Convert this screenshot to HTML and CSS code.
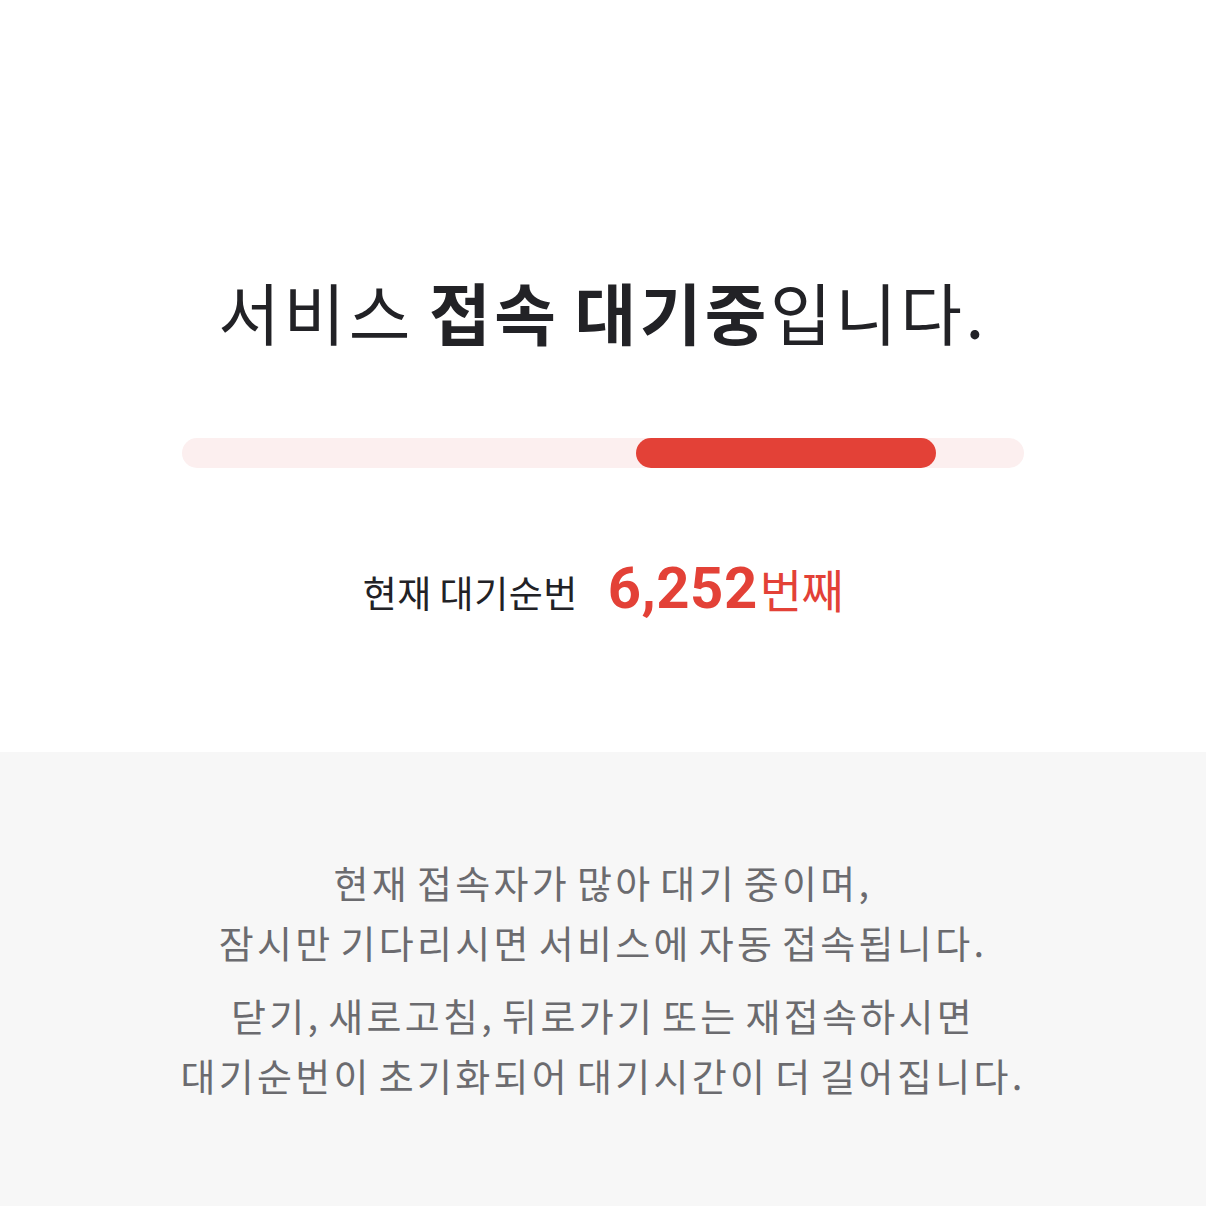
FILE: index.html
```html
<!DOCTYPE html>
<html lang="ko">
<head>
  <meta charset="UTF-8">
  <title>서비스 접속 대기중</title>
  <meta name="viewport" content="width=device-width, initial-scale=1">
  <link rel="stylesheet" href="styles.css">
</head>
<body>
<main class="queue">
  <section class="queue-top">
    <h1 class="queue-title">서비스 <strong>접속 대기중</strong>입니다.</h1>
    <div class="progress">
      <div class="progress-bar"></div>
    </div>
    <p class="queue-number">
      <span class="label">현재 대기순번</span>
      <span class="count"><b>6,252</b>번째</span>
    </p>
  </section>
  <section class="queue-notice">
    <p>현재 접속자가 많아 대기 중이며,<br>잠시만 기다리시면 서비스에 자동 접속됩니다.</p>
    <p>닫기, 새로고침, 뒤로가기 또는 재접속하시면<br>대기순번이 초기화되어 대기시간이 더 길어집니다.</p>
  </section>
</main>
</body>
</html>
```

FILE: styles.css
```css
:root {
    --red: #e34137;
    --text: #222226;
    --muted: #6b6b6f;
}

body {
    margin: 0;
    background: #fff;
    font-family: "Noto Sans CJK KR", "Noto Sans", sans-serif;
    color: var(--text);
}

.queue {
    min-height: 1206px;
    display: flex;
    flex-direction: column;
}

.queue-top {
    height: 752px;
    display: flex;
    flex-direction: column;
    align-items: center;
    box-sizing: border-box;
    padding-top: 264px;
}

.queue-title {
    margin: 0;
    font-size: 67px;
    font-weight: 400;
    line-height: 94px;
    letter-spacing: 3.5px;
    word-spacing: -7px;
}

.queue-title strong {
    font-weight: 700;
}

.progress {
    margin-top: 80px;
    width: 842px;
    height: 30px;
    border-radius: 15px;
    background: #fcefef;
    overflow: hidden;
}

.progress-bar {
    margin-left: 454px;
    width: 300px;
    height: 100%;
    border-radius: 15px;
    background: var(--red);
}

.queue-number {
    margin: 90px 0 0;
    display: flex;
    align-items: baseline;
    gap: 30px;
    line-height: 60px;
}

.queue-number .label {
    font-size: 37px;
    letter-spacing: 0.5px;
    word-spacing: -3px;
}

.queue-number .count {
    color: var(--red);
    font-size: 46px;
    letter-spacing: -0.5px;
}

.queue-number .count b {
    font-family: Roboto, "Noto Sans", sans-serif;
    font-size: 58px;
    font-weight: 700;
    letter-spacing: 0.5px;
    margin-right: 2px;
}

.queue-notice {
    flex: 1;
    background: #f7f7f7;
    padding-top: 100px;
    text-align: center;
    color: var(--muted);
    font-size: 38px;
    line-height: 60px;
    letter-spacing: 3.3px;
    word-spacing: -7px;
}

.queue-notice p {
    margin: 0 0 13px;
}
```
